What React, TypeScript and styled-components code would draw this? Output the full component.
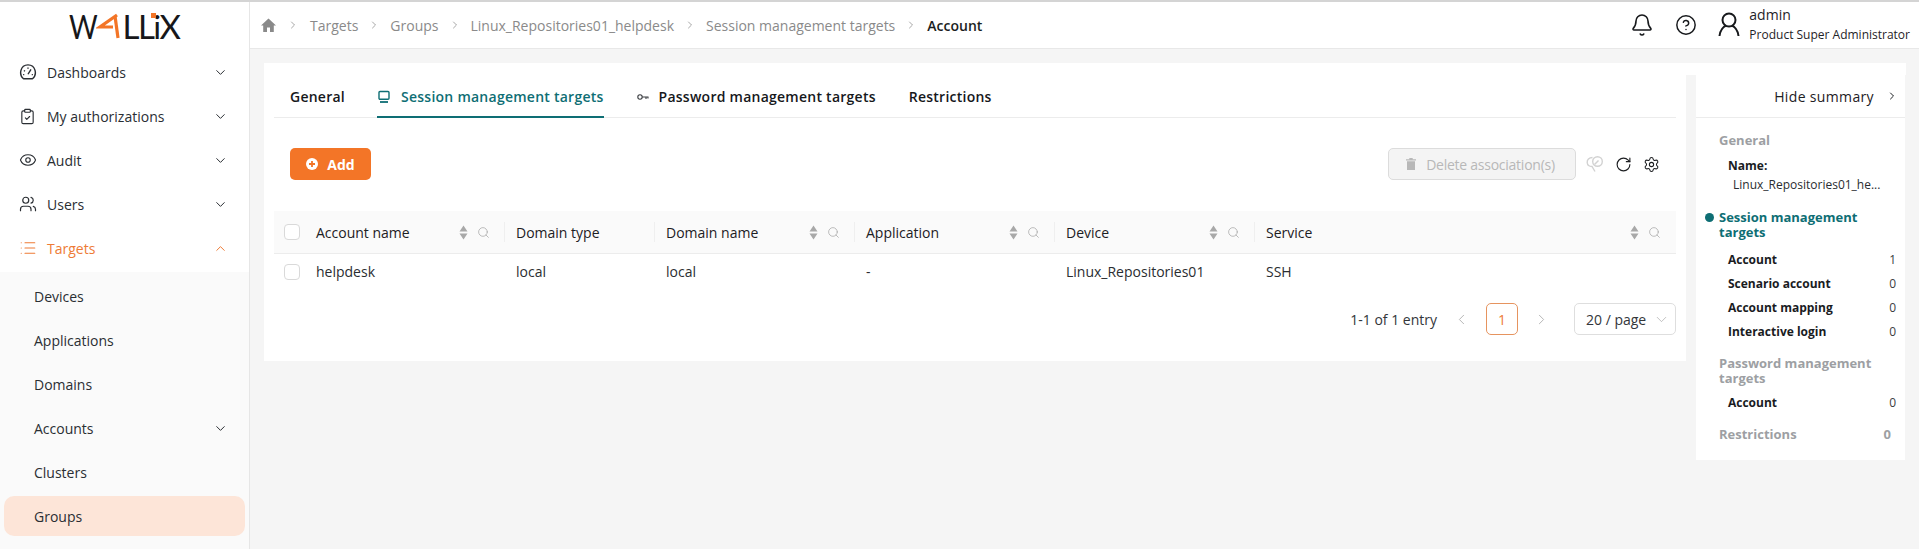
import React from 'react';
import styled, { createGlobalStyle } from 'styled-components';
import {
  Bell,
  ChevronDown,
  ChevronLeft,
  ChevronRight,
  ChevronUp,
  CircleHelp,
  ClipboardCheck,
  Eye,
  List,
  RotateCw,
  Search,
  Settings,
  Users,
} from 'lucide-react';

const GlobalStyle = createGlobalStyle`
  html, body {
    margin: 0;
    padding: 0;
    height: 100%;
    overflow: hidden;
    background: #f5f5f5;
    font-family: 'Open Sans', sans-serif;
    font-size: 14px;
    color: #1f2328;
  }
  * { box-sizing: border-box; }
`;

// Shell
const Page = styled.div`
  display: flex;
  width: 1919px;
  height: 549px;
  border-top: 2px solid #d4d4d4;
  overflow: hidden;
`;

const Sidebar = styled.aside`
  flex: 0 0 250px;
  background: #fff;
  border-right: 1px solid #e6e6e6;
`;

const LogoBox = styled.div`
  height: 48px;
  display: flex;
  align-items: center;
  justify-content: center;
  padding-right: 1px;
  font-family: 'Lato', sans-serif;
  font-size: 33px;
  line-height: 1;
  color: #17171a;
`;

const LogoW = styled.span`
  display: inline-block;
  width: 27px;
  transform: scaleX(0.84);
  transform-origin: left center;
`;

const LogoRest = styled.span`
  position: relative;
  letter-spacing: -1.6px;
  margin-left: 3px;
`;

const LogoDot = styled.span`
  position: absolute;
  left: 28px;
  top: 3px;
  width: 5px;
  height: 5px;
  background: #f37527;
`;

const NavRow = styled.div<{ $active?: boolean }>`
  height: 44px;
  display: flex;
  align-items: center;
  padding: 0 21px 0 19px;
  font-size: 14px;
  color: ${(p) => (p.$active ? '#ee7b36' : '#2a2e33')};
`;

const NavIcon = styled.span`
  flex: 0 0 28px;
  display: flex;
  align-items: center;
`;

const NavLabel = styled.span`
  flex: 1;
`;

const SubMenu = styled.div`
  background: #fafafa;
  margin-top: 2px;
  padding: 4px 4px 0;
  height: 277px;
`;

const SubRow = styled.div<{ $selected?: boolean }>`
  height: 40px;
  margin-bottom: 4px;
  display: flex;
  align-items: center;
  justify-content: space-between;
  padding: 0 17px 0 30px;
  border-radius: 10px;
  background: ${(p) => (p.$selected ? '#fde5d8' : 'transparent')};
  color: #2a2e33;
`;

const Main = styled.div`
  flex: 1;
  display: flex;
  flex-direction: column;
  min-width: 0;
`;

const Header = styled.header`
  height: 47px;
  background: #fff;
  border-bottom: 1px solid #e8e8e8;
  display: flex;
  align-items: center;
  justify-content: space-between;
  padding: 0 9px 0 11px;
`;

const Crumbs = styled.nav`
  display: flex;
  align-items: center;
  color: #8a8a8a;
  font-size: 14px;
`;

const CrumbSep = styled.span<{ $wide?: boolean }>`
  display: flex;
  justify-content: center;
  width: ${(p) => (p.$wide ? 34 : 32)}px;
  color: #8a8a8a;
`;

const CrumbCurrent = styled.span`
  color: #1b1e22;
  font-weight: 600;
`;

const HeaderRight = styled.div`
  display: flex;
  align-items: center;
`;

const HeaderIcon = styled.span<{ $gap?: number }>`
  display: flex;
  margin-right: ${(p) => p.$gap ?? 21}px;
  color: #17191c;
`;

const UserInfo = styled.div`
  display: flex;
  flex-direction: column;
`;

const UserName = styled.span`
  font-size: 14px;
  line-height: 20px;
`;

const UserRole = styled.span`
  font-size: 12px;
  line-height: 20px;
`;

const Content = styled.div`
  padding: 14px 13px 0 14px;
  flex: 1;
`;

const TopStrip = styled.div`
  height: 12px;
  background: #fff;
`;

const Columns = styled.div`
  display: flex;
  align-items: flex-start;
  gap: 10px;
`;

// Main card
const Card = styled.section`
  flex: 0 0 1422px;
  height: 286px;
  background: #fff;
  padding: 0 10px;
`;

const Tabs = styled.div`
  height: 43px;
  display: flex;
  border-bottom: 1px solid #ececec;
  font-weight: 600;
  letter-spacing: 0.25px;
  color: #16181b;
  padding-left: 16px;
`;

const Tab = styled.div<{ $active?: boolean; $gap?: number }>`
  display: flex;
  align-items: center;
  gap: 10px;
  height: 43px;
  padding-top: 2px;
  margin-right: ${(p) => p.$gap ?? 33}px;
  color: ${(p) => (p.$active ? '#0e6e74' : 'inherit')};
  border-bottom: 2px solid ${(p) => (p.$active ? '#0e6e74' : 'transparent')};
`;

const Toolbar = styled.div`
  height: 93px;
  padding: 30px 0 0 16px;
  display: flex;
  justify-content: space-between;
  align-items: flex-start;
`;

const AddButton = styled.button`
  width: 81px;
  height: 32px;
  border: none;
  border-radius: 5px;
  background: #f37527;
  color: #fff;
  font: 700 14px 'Open Sans', sans-serif;
  display: flex;
  align-items: center;
  justify-content: center;
  gap: 9px;
  padding: 0;
`;

const ToolRight = styled.div`
  display: flex;
  align-items: center;
  height: 32px;
  margin-right: 5px;
`;

const DeleteButton = styled.button`
  width: 188px;
  height: 32px;
  border: 1px solid #dcdcdc;
  border-radius: 5px;
  background: #f4f4f4;
  color: #b8b8b8;
  font: 400 14px 'Open Sans', sans-serif;
  letter-spacing: -0.25px;
  display: flex;
  align-items: center;
  justify-content: center;
  gap: 10px;
  padding: 0 3px 0 0;
  margin-right: 10px;
`;

const ToolIcon = styled.span`
  display: flex;
  margin-right: 11px;
  color: #1c1e21;
`;

const GRID = '42px 189px 150px 200px 200px 200px 1fr';

const HeadRow = styled.div`
  display: grid;
  grid-template-columns: ${GRID};
  height: 43px;
  background: #fafafa;
  border-bottom: 1px solid #ececec;
  font-weight: 500;
  color: #1d2024;
`;

const BodyRow = styled.div`
  display: grid;
  grid-template-columns: ${GRID};
  height: 35px;
  color: #2a2d31;
`;

const CheckCell = styled.div`
  display: flex;
  align-items: center;
  padding-left: 10px;
`;

const CheckBox = styled.span`
  width: 16px;
  height: 16px;
  border: 1px solid #d9d9d9;
  border-radius: 4px;
  background: #fff;
`;

const HeadCell = styled.div<{ $first?: boolean; $divider?: boolean }>`
  position: relative;
  display: flex;
  align-items: center;
  justify-content: space-between;
  padding: 0 15px 0 ${(p) => (p.$first ? 0 : 11)}px;

  ${(p) =>
    p.$divider &&
    `&::after {
      content: '';
      position: absolute;
      right: 0;
      top: 11px;
      bottom: 11px;
      width: 1px;
      background: #efefef;
    }`}
`;

const HeadTools = styled.span`
  display: flex;
  align-items: center;
  gap: 9px;
  color: #a8a8a8;
`;

const SortArrows = styled.svg`
  width: 9px;
  height: 15px;
  fill: #a8a8a8;
`;

const BodyCell = styled.div<{ $first?: boolean }>`
  display: flex;
  align-items: center;
  padding-left: ${(p) => (p.$first ? 0 : 11)}px;
`;

const Pager = styled.div`
  display: flex;
  justify-content: flex-end;
  align-items: center;
  height: 32px;
  margin-top: 14px;
  color: #33363a;
`;

const PagerText = styled.span`
  margin-right: 16px;
`;

const PagerArrow = styled.span<{ $margin: number }>`
  display: flex;
  color: #b0b0b0;
  margin-right: ${(p) => p.$margin}px;
`;

const PageNum = styled.span`
  width: 32px;
  height: 32px;
  border: 1px solid #e6945f;
  border-radius: 5px;
  color: #ee7b36;
  display: flex;
  align-items: center;
  justify-content: center;
  font-weight: 500;
  margin-right: 15px;
`;

const PageSize = styled.span`
  width: 102px;
  height: 32px;
  border: 1px solid #dedede;
  border-radius: 5px;
  display: flex;
  align-items: center;
  justify-content: space-between;
  padding: 0 5px 0 11px;
  color: #33363a;
`;

// Summary panel
const Summary = styled.aside`
  flex: 0 0 209px;
  height: 385px;
  background: #fff;
`;

const SummaryTop = styled.div`
  height: 43px;
  display: flex;
  align-items: center;
  justify-content: flex-end;
  gap: 12px;
  padding-right: 7px;
  border-bottom: 1px solid #ececec;
  color: #1d2024;
  letter-spacing: 0.35px;
`;

const SummaryBody = styled.div`
  padding: 15px 9px 0 23px;
`;

const SectionTitle = styled.div<{ $active?: boolean; $top?: number }>`
  position: relative;
  font-size: 13px;
  font-weight: 700;
  line-height: 15px;
  margin-top: ${(p) => p.$top ?? 0}px;
  color: ${(p) => (p.$active ? '#0e6e74' : '#9d9fa3')};
`;

const ActiveDot = styled.span`
  position: absolute;
  left: -14px;
  top: 3px;
  width: 9px;
  height: 9px;
  border-radius: 50%;
  background: #0e6e74;
`;

const NameLabel = styled.div`
  font-size: 12px;
  font-weight: 700;
  line-height: 16px;
  margin: 10px 0 0 9px;
  color: #1a1c1f;
`;

const NameValue = styled.div`
  font-size: 12px;
  line-height: 16px;
  margin: 3px 0 0 14px;
  color: #2a2d31;
  white-space: nowrap;
`;

const CountRow = styled.div`
  display: flex;
  justify-content: space-between;
  align-items: center;
  height: 24px;
  font-size: 12px;
  padding-left: 9px;
  color: #1a1c1f;
`;

const CountLabel = styled.span`
  font-weight: 700;
`;

const CountValue = styled.span`
  color: #3a3d41;
`;

const CountList = styled.div<{ $top: number }>`
  margin-top: ${(p) => p.$top}px;
`;

const RestrictionRow = styled.div`
  display: flex;
  justify-content: space-between;
  margin-top: 13px;
  padding-right: 5px;
  font-size: 13px;
  font-weight: 700;
  line-height: 15px;
  color: #9d9fa3;
`;

// Drawn icons
const HomeIcon = () => (
  <svg width="15" height="14" viewBox="0 0 15 14" fill="#8a8a8a">
    <path d="M7.5 0.5 L15 7.5 H12.8 V14 H9 V9.5 H6 V14 H2.2 V7.5 H0 Z" />
  </svg>
);

const LogoA = () => (
  <svg width="24" height="26" viewBox="0 0 24 26" fill="none" stroke="#f37527" strokeWidth="3.2">
    <path d="M21 2 L4 14 H17" />
    <path d="M19 3 L22 25" />
  </svg>
);

const GaugeIcon = () => (
  <svg width="18" height="18" viewBox="0 0 24 24" fill="none" stroke="currentColor" strokeWidth="1.9" strokeLinejoin="round">
    <path d="M6 21 C-0.5 16 1.5 2.5 12 2.5 C22.5 2.5 24.5 16 18 21 Z" />
    <path d="M12 15 L16 8.5 M12 6 V7.5 M6.5 10 L8 11 M5.5 15.5 H7 M18.5 15.5 H17" />
  </svg>
);

const PersonIcon = () => (
  <svg width="22" height="26" viewBox="0 0 22 26" fill="none" stroke="#17191c" strokeWidth="2">
    <circle cx="11" cy="8" r="6.5" />
    <path d="M1.5 24 C2 18 6 14.5 8 13.5 M20.5 24 C20 18 16 14.5 14 13.5" />
  </svg>
);

const DisabledFilterIcon = () => (
  <svg width="18" height="18" viewBox="0 0 18 18" fill="none" stroke="#d2d2d2" strokeWidth="1.4">
    <circle cx="11.5" cy="6.5" r="4.8" />
    <path d="M8.5 9.5 L12.5 5.5" />
    <path d="M6.5 2.5 C3 2.5 1 5 1.2 7.5 C1.4 10 3.5 11.5 6 11.5 L9 16.5" />
  </svg>
);

const TrashIcon = () => (
  <svg width="10" height="12" viewBox="0 0 10 12" fill="#b8b8b8">
    <path d="M0 1.2 H3.3 V0 H6.7 V1.2 H10 V2.4 H0 Z M1 3.2 H9 V12 H1 Z" />
  </svg>
);

const PlusCircleIcon = () => (
  <svg width="12" height="12" viewBox="0 0 12 12">
    <circle cx="6" cy="6" r="6" fill="#fff" />
    <path d="M6 3 V9 M3 6 H9" stroke="#f37527" strokeWidth="1.8" />
  </svg>
);

const MonitorIcon = () => (
  <svg width="14" height="14" viewBox="0 0 14 14" fill="none">
    <rect x="2" y="1.5" width="10" height="7.8" rx="1" stroke="#0e6e74" strokeWidth="1.4" />
    <path d="M3 12 H11" stroke="#0e6e74" strokeWidth="1.8" />
  </svg>
);

const KeyIcon = () => (
  <svg width="12" height="8" viewBox="0 0 12 8" fill="none" stroke="#3a3d41" strokeWidth="1.1">
    <circle cx="3" cy="4" r="2.2" />
    <path d="M5.2 4 H11.5 M9 4 V6 M11 4 V5.5" />
  </svg>
);

const Sort = () => (
  <SortArrows viewBox="0 0 9 15">
    <path d="M4.5 0.5 L8.5 6.5 H0.5 Z M4.5 14.5 L0.5 8.5 H8.5 Z" />
  </SortArrows>
);

const columns = [
  { label: 'Account name', tools: true, first: true, divider: true },
  { label: 'Domain type', tools: false, divider: true },
  { label: 'Domain name', tools: true, divider: true },
  { label: 'Application', tools: true, divider: true },
  { label: 'Device', tools: true, divider: true },
  { label: 'Service', tools: true },
];

const row = ['helpdesk', 'local', 'local', '-', 'Linux_Repositories01', 'SSH'];

const navItems = [
  { label: 'Dashboards', icon: <GaugeIcon /> },
  { label: 'My authorizations', icon: <ClipboardCheck size={17} strokeWidth={1.6} /> },
  { label: 'Audit', icon: <Eye size={18} strokeWidth={1.5} /> },
  { label: 'Users', icon: <Users size={18} strokeWidth={1.6} /> },
];

const crumbs = ['Targets', 'Groups', 'Linux_Repositories01_helpdesk', 'Session management targets'];

const App = () => (
  <>
    <GlobalStyle />
    <Page>
      <Sidebar>
        <LogoBox>
          <LogoW>W</LogoW>
          <LogoA />
          <LogoRest>
            LLiX
            <LogoDot />
          </LogoRest>
        </LogoBox>
        {navItems.map(({ label, icon }) => (
          <NavRow key={label}>
            <NavIcon>{icon}</NavIcon>
            <NavLabel>{label}</NavLabel>
            <ChevronDown size={15} strokeWidth={1.6} />
          </NavRow>
        ))}
        <NavRow $active>
          <NavIcon>
            <List size={18} strokeWidth={1.5} />
          </NavIcon>
          <NavLabel>Targets</NavLabel>
          <ChevronUp size={15} strokeWidth={1.6} />
        </NavRow>
        <SubMenu>
          <SubRow>Devices</SubRow>
          <SubRow>Applications</SubRow>
          <SubRow>Domains</SubRow>
          <SubRow>
            Accounts
            <ChevronDown size={15} strokeWidth={1.6} />
          </SubRow>
          <SubRow>Clusters</SubRow>
          <SubRow $selected>Groups</SubRow>
        </SubMenu>
      </Sidebar>

      <Main>
        <Header>
          <Crumbs>
            <HomeIcon />
            <CrumbSep $wide>
              <ChevronRight size={12} strokeWidth={1.5} />
            </CrumbSep>
            {crumbs.map((c) => (
              <React.Fragment key={c}>
                <span>{c}</span>
                <CrumbSep>
                  <ChevronRight size={12} strokeWidth={1.5} />
                </CrumbSep>
              </React.Fragment>
            ))}
            <CrumbCurrent>Account</CrumbCurrent>
          </Crumbs>
          <HeaderRight>
            <HeaderIcon>
              <Bell size={24} strokeWidth={1.6} />
            </HeaderIcon>
            <HeaderIcon>
              <CircleHelp size={22} strokeWidth={1.6} />
            </HeaderIcon>
            <HeaderIcon $gap={9}>
              <PersonIcon />
            </HeaderIcon>
            <UserInfo>
              <UserName>admin</UserName>
              <UserRole>Product Super Administrator</UserRole>
            </UserInfo>
          </HeaderRight>
        </Header>

        <Content>
          <TopStrip />
          <Columns>
            <Card>
              <Tabs>
                <Tab $gap={32}>General</Tab>
                <Tab $active $gap={33}>
                  <MonitorIcon />
                  Session management targets
                </Tab>
                <Tab>
                  <KeyIcon />
                  Password management targets
                </Tab>
                <Tab>Restrictions</Tab>
              </Tabs>
              <Toolbar>
                <AddButton>
                  <PlusCircleIcon />
                  Add
                </AddButton>
                <ToolRight>
                  <DeleteButton>
                    <TrashIcon />
                    Delete association(s)
                  </DeleteButton>
                  <ToolIcon>
                    <DisabledFilterIcon />
                  </ToolIcon>
                  <ToolIcon>
                    <RotateCw size={17} strokeWidth={1.6} />
                  </ToolIcon>
                  <ToolIcon>
                    <Settings size={17} strokeWidth={1.5} />
                  </ToolIcon>
                </ToolRight>
              </Toolbar>
              <HeadRow>
                <CheckCell>
                  <CheckBox />
                </CheckCell>
                {columns.map((c) => (
                  <HeadCell key={c.label} $first={c.first} $divider={c.divider}>
                    {c.label}
                    {c.tools && (
                      <HeadTools>
                        <Sort />
                        <Search size={13} strokeWidth={1.4} />
                      </HeadTools>
                    )}
                  </HeadCell>
                ))}
              </HeadRow>
              <BodyRow>
                <CheckCell>
                  <CheckBox />
                </CheckCell>
                {row.map((v, i) => (
                  <BodyCell key={i} $first={i === 0}>
                    {v}
                  </BodyCell>
                ))}
              </BodyRow>
              <Pager>
                <PagerText>1-1 of 1 entry</PagerText>
                <PagerArrow $margin={16}>
                  <ChevronLeft size={17} strokeWidth={1.3} />
                </PagerArrow>
                <PageNum>1</PageNum>
                <PagerArrow $margin={24}>
                  <ChevronRight size={17} strokeWidth={1.3} />
                </PagerArrow>
                <PageSize>
                  20 / page
                  <ChevronDown size={17} strokeWidth={1} color="#a8a8a8" />
                </PageSize>
              </Pager>
            </Card>

            <Summary>
              <SummaryTop>
                Hide summary
                <ChevronRight size={12} strokeWidth={2} />
              </SummaryTop>
              <SummaryBody>
                <SectionTitle>General</SectionTitle>
                <NameLabel>Name:</NameLabel>
                <NameValue>Linux_Repositories01_he...</NameValue>
                <SectionTitle $active $top={17}>
                  <ActiveDot />
                  Session management targets
                </SectionTitle>
                <CountList $top={7}>
                  <CountRow>
                    <CountLabel>Account</CountLabel>
                    <CountValue>1</CountValue>
                  </CountRow>
                  <CountRow>
                    <CountLabel>Scenario account</CountLabel>
                    <CountValue>0</CountValue>
                  </CountRow>
                  <CountRow>
                    <CountLabel>Account mapping</CountLabel>
                    <CountValue>0</CountValue>
                  </CountRow>
                  <CountRow>
                    <CountLabel>Interactive login</CountLabel>
                    <CountValue>0</CountValue>
                  </CountRow>
                </CountList>
                <SectionTitle $top={13}>Password management targets</SectionTitle>
                <CountList $top={4}>
                  <CountRow>
                    <CountLabel>Account</CountLabel>
                    <CountValue>0</CountValue>
                  </CountRow>
                </CountList>
                <RestrictionRow>
                  <span>Restrictions</span>
                  <span>0</span>
                </RestrictionRow>
              </SummaryBody>
            </Summary>
          </Columns>
        </Content>
      </Main>
    </Page>
  </>
);

export default App;
